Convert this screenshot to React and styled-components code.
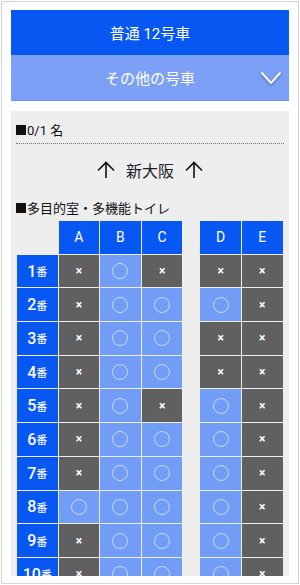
import React from 'react'
import styled, { createGlobalStyle } from 'styled-components'

const GlobalStyle = createGlobalStyle`
  html, body {
    margin: 0;
    padding: 0;
    background: #fff;
  }
  body {
    font-family: Roboto, "Noto Sans CJK JP", sans-serif;
    color: #111;
  }
`

// seat map: true = available (○), false = taken (×)
const rows = [
  [false, true, false, false, false],
  [false, true, true, true, false],
  [false, true, true, false, false],
  [false, true, true, false, false],
  [false, true, false, true, false],
  [false, true, true, true, false],
  [false, true, true, true, false],
  [true, true, true, true, false],
  [false, true, true, true, false],
  [false, true, true, true, false],
]

const App = () => {
  return (
    <>
      <GlobalStyle />
      <Frame>
        <CarTitle>普通 12号車</CarTitle>
        <OtherCars>
          その他の号車
          <Chevron viewBox="0 0 22 14">
            <polyline points="1.5,1.5 11,12 20.5,1.5" />
          </Chevron>
        </OtherCars>

        <Panel>
          <Heading><Square />0/1 名</Heading>
          <Dotted />
          <Direction>
            <Arrow viewBox="0 0 20 18">
              <path d="M10 17 V1.5 M2 9.5 L10 1.5 L18 9.5" />
            </Arrow>
            新大阪
            <Arrow viewBox="0 0 20 18">
              <path d="M10 17 V1.5 M2 9.5 L10 1.5 L18 9.5" />
            </Arrow>
          </Direction>
          <Heading><Square />多目的室・多機能トイレ</Heading>

          <SeatGrid>
            <Blank />
            <ColHead>A</ColHead>
            <ColHead>B</ColHead>
            <ColHead>C</ColHead>
            <Blank />
            <ColHead>D</ColHead>
            <ColHead>E</ColHead>
            {rows.map((row, i) => (
              <React.Fragment key={i}>
                <RowHead><b>{i + 1}</b>番</RowHead>
                {row.slice(0, 3).map((free, j) => (
                  <Seat key={j} free={free}>{free ? <Circle /> : '×'}</Seat>
                ))}
                <Blank />
                {row.slice(3).map((free, j) => (
                  <Seat key={j + 3} free={free}>{free ? <Circle /> : '×'}</Seat>
                ))}
              </React.Fragment>
            ))}
          </SeatGrid>
        </Panel>
      </Frame>
    </>
  )
}

export default App

const Frame = styled.div`
  margin: 1px;
  width: 298px;
  height: 583px;
  box-sizing: border-box;
  border: 1px solid #d4d4d4;
  padding: 8px 9px 7px 9px;
  display: flex;
  flex-direction: column;
  overflow: hidden;
`

const CarTitle = styled.div`
  height: 45px;
  background: #0757f2;
  color: #fff;
  font-size: 15px;
  display: flex;
  align-items: center;
  justify-content: center;
`

const OtherCars = styled.div`
  position: relative;
  height: 45px;
  background: #7ba0f5;
  border-bottom: 1px solid #6a90ea;
  color: #fff;
  font-size: 15px;
  display: flex;
  align-items: center;
  justify-content: center;
`

const Chevron = styled.svg`
  position: absolute;
  right: 7px;
  top: 16px;
  width: 22px;
  height: 14px;
  fill: none;
  stroke: #fff;
  stroke-width: 2;
  filter: drop-shadow(0 1px 1px rgba(0, 0, 60, 0.45));
`

const Panel = styled.div`
  margin-top: 10px;
  flex: 1;
  background: #eeeeee;
  padding: 10px 5px 0 5px;
  overflow: hidden;
`

const Heading = styled.div`
  display: flex;
  align-items: center;
  font-size: 13px;
  height: 17px;
  color: #111;
`

const Square = styled.span`
  display: inline-block;
  width: 10px;
  height: 10px;
  background: #111;
  margin-right: 1px;
`

const Dotted = styled.div`
  margin-top: 5px;
  border-top: 1px dotted #777;
`

const Direction = styled.div`
  height: 52px;
  display: flex;
  align-items: center;
  justify-content: center;
  gap: 10px;
  font-size: 16px;
  color: #222;
  margin-bottom: 3px;
`

const Arrow = styled.svg`
  width: 20px;
  height: 18px;
  fill: none;
  stroke: #111;
  stroke-width: 1.6;
`

const SeatGrid = styled.div`
  margin: 5px 0 0 1px;
  display: grid;
  grid-template-columns: 40.6px 40.6px 40.6px 40.6px 16px 40.6px 40.6px;
  grid-auto-rows: 32.7px;
  gap: 1px;
`

const Blank = styled.div``

const ColHead = styled.div`
  background: #0757f2;
  color: #fff;
  font-size: 14px;
  display: flex;
  align-items: center;
  justify-content: center;
`

const RowHead = styled.div`
  background: #0757f2;
  color: #fff;
  font-size: 11px;
  display: flex;
  align-items: center;
  justify-content: center;

  b {
    font-size: 16px;
    font-weight: 500;
  }
`

const Seat = styled.div`
  background: ${props => props.free ? '#719df7' : '#606060'};
  color: #fff;
  font-size: 12px;
  font-weight: bold;
  display: flex;
  align-items: center;
  justify-content: center;
`

const Circle = styled.span`
  width: 14px;
  height: 14px;
  border-radius: 50%;
  border: 1px solid rgba(255, 255, 255, 0.6);
`
